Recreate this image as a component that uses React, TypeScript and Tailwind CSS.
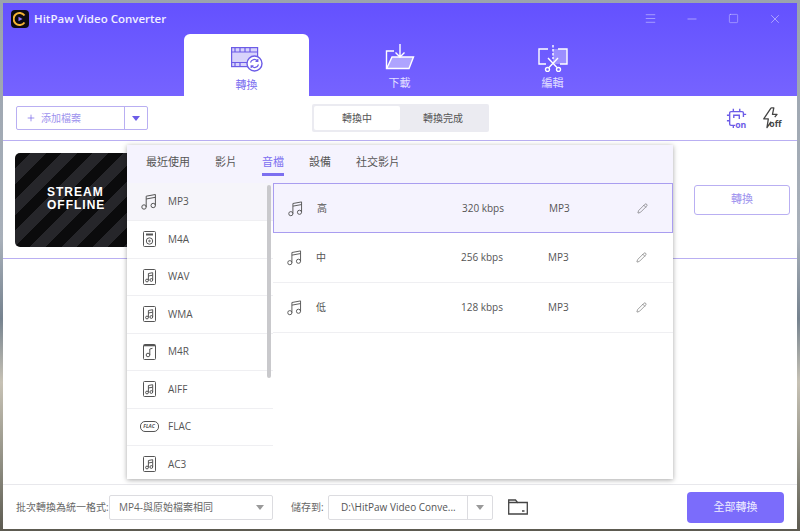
import { Menu, Minus, Square, X, Plus, Pencil } from 'lucide-react'

const font = { fontFamily: '"Open Sans", "Noto Sans CJK TC", sans-serif' }

const formats = [
  { name: 'MP3', icon: 'note' },
  { name: 'M4A', icon: 'player' },
  { name: 'WAV', icon: 'file' },
  { name: 'WMA', icon: 'file' },
  { name: 'M4R', icon: 'ring' },
  { name: 'AIFF', icon: 'file' },
  { name: 'FLAC', icon: 'flac' },
  { name: 'AC3', icon: 'file' }
]

const qualities = [
  { label: '高', rate: '320 kbps' },
  { label: '中', rate: '256 kbps' },
  { label: '低', rate: '128 kbps' }
]

function NoteIcon({ className = 'w-[17px] h-[17px]' }: { className?: string }) {
  return (
    <svg viewBox="0 0 17 17" className={className} fill="none" stroke="#555" strokeWidth="1">
      <circle cx="3" cy="14" r="2.2" />
      <circle cx="12.2" cy="12.5" r="2.2" />
      <path d="M5.2 14V3.2L14.4 1.5V12.5M5.2 6L14.4 4.3" />
    </svg>
  )
}

function FormatIcon({ type }: { type: string }) {
  if (type === 'note') return <NoteIcon />
  if (type === 'flac') {
    return (
      <div className="w-[19px] h-[11px] rounded-[5px] border border-[#555] flex items-center justify-center text-[5px] font-bold italic text-[#555] leading-none">
        FLAC
      </div>
    )
  }
  if (type === 'player') {
    return (
      <svg viewBox="0 0 13 16" className="w-[13px] h-[16px]" fill="none" stroke="#555" strokeWidth="1">
        <rect x="0.5" y="0.5" width="12" height="15" rx="1" />
        <path d="M3 3.5H10" strokeWidth="2" />
        <circle cx="6.5" cy="10" r="3.2" />
        <circle cx="6.5" cy="10" r="0.8" />
      </svg>
    )
  }
  if (type === 'ring') {
    return (
      <svg viewBox="0 0 13 16" className="w-[13px] h-[16px]" fill="none" stroke="#555" strokeWidth="1">
        <rect x="0.5" y="0.5" width="12" height="15" rx="1" />
        <path d="M1 1.5H12" strokeWidth="1.6" />
        <circle cx="5" cy="11" r="1.8" />
        <path d="M6.8 11V5L9.5 4.3" />
      </svg>
    )
  }
  return (
    <svg viewBox="0 0 13 16" className="w-[13px] h-[16px]" fill="none" stroke="#555" strokeWidth="1">
      <rect x="0.5" y="0.5" width="12" height="15" rx="1" />
      <circle cx="4" cy="11.5" r="1.4" />
      <circle cx="8.3" cy="11" r="1.4" />
      <path d="M5.4 11.5V4.5L9.7 3.7V11M5.4 7L9.7 6.2" />
    </svg>
  )
}

function ConvertIcon() {
  return (
    <svg viewBox="0 0 32 27" className="w-[32px] h-[27px]" fill="none" stroke="#6c5ce7" strokeWidth="1.2">
      <rect x="0.6" y="0.6" width="26" height="19" fill="#d8d3fb" />
      <path d="M0.6 5H26.6M0.6 15.5H17M4 0.6V5M9 0.6V5M14 0.6V5M19 0.6V5M4 15.5V19.6M9 15.5V19.6" />
      <circle cx="23.5" cy="16.5" r="7.5" fill="#fff" strokeWidth="1.4" />
      <path d="M19.5 15.5a4 4 0 0 1 7-1.5M27.5 17.5a4 4 0 0 1-7 1.5M26.8 12V14.3H24.5M20.2 21V18.8H22.5" />
    </svg>
  )
}

function DownloadIcon() {
  return (
    <svg viewBox="0 0 30 30" className="w-[30px] h-[30px]" fill="none" stroke="#fff" strokeWidth="1.4">
      <path d="M15 1V14M10.5 9.5L15 14L19.5 9.5" />
      <path d="M9 8H1.5V25.5H24L28.5 14H7L2 25" />
      <path d="M7 14H28.5L24 25.5H2.5Z" fill="#ffffff70" stroke="none" />
    </svg>
  )
}

function EditIcon() {
  return (
    <svg viewBox="0 0 30 27" className="w-[30px] h-[27px]" fill="none" stroke="#fff" strokeWidth="1.4">
      <path d="M10 4H1V19H8M20 4H29V19H22" />
      <rect x="15" y="4" width="14" height="15" fill="#ffffff50" stroke="none" />
      <path d="M15 0V14" strokeDasharray="2.5 1.5" />
      <path d="M10 13L19 22.5M20 13L11 22.5" />
      <circle cx="9.5" cy="24.5" r="2" />
      <circle cx="20.5" cy="24.5" r="2" />
    </svg>
  )
}

function ChipOnIcon() {
  return (
    <svg viewBox="0 0 24 24" className="w-[22px] h-[22px]" fill="none" stroke="#6c5ce7" strokeWidth="1.5">
      <path d="M10 20H5.5A1.5 1.5 0 0 1 4 18.5V6.5A1.5 1.5 0 0 1 5.5 5H17.5A1.5 1.5 0 0 1 19 6.5V11" />
      <path d="M8.5 12V9H14.5V13M8 2V5M15 2V5M1 9H4M1 15H4M19 8H22M8 20V23" />
      <text x="10" y="22.5" fontSize="9.5" fontWeight="700" fill="#6c5ce7" stroke="none" fontFamily="Open Sans">on</text>
    </svg>
  )
}

function FlashOffIcon() {
  return (
    <svg viewBox="0 0 24 24" className="w-[22px] h-[22px]" fill="none" stroke="#444" strokeWidth="1.4">
      <path d="M11 1L3 13H8L6.5 22.5L11 16M11 1H14L12.5 8H17.5L15 11" strokeLinejoin="round" />
      <text x="9" y="22" fontSize="9.5" fontWeight="700" fill="#444" stroke="none" fontFamily="Open Sans">off</text>
    </svg>
  )
}

function FolderIcon() {
  return (
    <svg viewBox="0 0 20 16" className="w-[20px] h-[16px]" fill="none" stroke="#444" strokeWidth="1.3">
      <path d="M0.7 15V1H7.5L9.5 3.5H19.3V15H0.7Z" />
      <path d="M0.7 3.5H9.5M14 12H16.5" />
    </svg>
  )
}

function Caret({ color = '#9a9a9a' }: { color?: string }) {
  return (
    <svg viewBox="0 0 8 5" className="w-[8px] h-[5px]">
      <path d="M0 0H8L4 5Z" fill={color} />
    </svg>
  )
}

function NavTab({ active, label, children }: { active?: boolean; label: string; children: React.ReactNode }) {
  return (
    <div
      className={
        active
          ? 'w-[125px] h-[62px] bg-white rounded-t-[6px] flex flex-col items-center pt-[11px] text-[#7c6ff0]'
          : 'w-[125px] h-[62px] flex flex-col items-center pt-[9px] text-[#e4e0ff]'
      }
    >
      <div className="h-[30px] flex items-center">{children}</div>
      <span className="text-[11px] leading-[14px] mt-[3px]">{label}</span>
    </div>
  )
}

function FormatPopup() {
  return (
    <div className="absolute left-[124px] top-[142px] w-[546px] h-[334px] bg-white shadow-[0_1px_5px_rgba(0,0,0,0.35)] flex flex-col z-10">
      <div className="h-[38px] shrink-0 bg-[#f5f3fe] flex items-start pl-[19px] gap-[25px] text-[11px] text-[#555] leading-[14px] pt-[10px]">
        <span>最近使用</span>
        <span>影片</span>
        <div className="flex flex-col items-center text-[#7c6ff0]">
          <span>音檔</span>
          <div className="w-[22px] h-[3px] bg-[#7c6ff0] mt-[4px]" />
        </div>
        <span>設備</span>
        <span>社交影片</span>
      </div>
      <div className="flex-1 flex min-h-0">
        <div className="w-[146px] shrink-0 relative overflow-hidden">
          {formats.map((f, i) => (
            <div
              key={f.name}
              className={
                i === 0
                  ? 'h-[38px] flex items-center bg-[#f6f5fa] border-b border-[#efeff2]'
                  : 'h-[37.5px] flex items-center border-b border-[#efeff2]'
              }
            >
              <div className="w-[41px] flex justify-center pl-[3px]">
                <FormatIcon type={f.icon} />
              </div>
              <span className="text-[10px] text-[#555]">{f.name}</span>
            </div>
          ))}
          <div className="absolute left-[140px] top-[2px] w-[4px] h-[193px] rounded-full bg-[#c9c9cc]" />
        </div>
        <div className="flex-1 flex flex-col">
          {qualities.map((q, i) => (
            <div
              key={q.label}
              className={
                i === 0
                  ? 'h-[50px] flex items-center pl-[14px] bg-[#f5f3fe] border border-[#a99df0] text-[10px] text-[#555]'
                  : 'h-[50px] flex items-center pl-[14px] border-b border-[#efeff2] text-[10px] text-[#555]'
              }
            >
              <NoteIcon className="w-[16px] h-[17px]" />
              <span className="ml-[13px] w-[145px]">{q.label}</span>
              <span className="w-[87px]">{q.rate}</span>
              <span className="w-[88px]">{q.name ?? 'MP3'}</span>
              <Pencil className="w-[11px] h-[11px] text-[#555]" strokeWidth={1.2} />
            </div>
          ))}
        </div>
      </div>
    </div>
  )
}

export default function App() {
  return (
    <div
      className="w-[800px] h-[531px] overflow-hidden pt-[3px] pl-[3px] bg-[linear-gradient(180deg,#9aa3ad_0%,#a8b0ba_45%,#76838f_60%,#c7c2b5_72%,#8d8c80_88%,#5c5a50_100%)]"
      style={font}
    >
      <div className="w-[794px] h-[526px] bg-white flex flex-col relative">
        {/* Title bar and tabs */}
        <div className="h-[93px] shrink-0 bg-gradient-to-b from-[#6451ff] to-[#7663ff] flex flex-col">
          <div className="h-[31px] flex items-center pl-[8px] pr-[15px]">
            <div className="w-[18px] h-[18px] rounded-[4px] bg-[#0d0b12] flex items-center justify-center">
              <svg viewBox="0 0 14 14" className="w-[14px] h-[14px]" fill="none">
                <path d="M11.5 3.5A6 6 0 1 0 11.5 10.5" stroke="#f5b335" strokeWidth="2" />
                <path d="M5.5 4.7L9.5 7L5.5 9.3Z" fill="#8f73ff" />
              </svg>
            </div>
            <span className="ml-[5px] text-[11.5px] font-semibold text-[#f1efff]">HitPaw Video Converter</span>
            <div className="ml-auto flex items-center gap-[28px] text-[#dcd8ff]">
              <Menu className="w-[13px] h-[13px]" strokeWidth={1} />
              <Minus className="w-[14px] h-[14px]" strokeWidth={1} />
              <Square className="w-[11px] h-[11px] mx-[1px]" strokeWidth={1} />
              <X className="w-[14px] h-[14px]" strokeWidth={1} />
            </div>
          </div>
          <div className="flex gap-[28px] pl-[181px]">
            <NavTab active label="轉換">
              <ConvertIcon />
            </NavTab>
            <NavTab label="下載">
              <DownloadIcon />
            </NavTab>
            <NavTab label="編輯">
              <EditIcon />
            </NavTab>
          </div>
        </div>

        {/* Toolbar */}
        <div className="h-[44px] shrink-0 flex items-center pl-[13px] pr-[14px]">
          <div className="w-[132px] h-[24px] border border-[#b9aff2] rounded-[2px] flex items-center">
            <div className="w-[107px] flex items-center pl-[9px] gap-[5px] text-[10px] text-[#9d92ee]">
              <Plus className="w-[10px] h-[10px] text-[#6c5ce7]" strokeWidth={1.6} />
              添加檔案
            </div>
            <div className="flex-1 h-full border-l border-[#b9aff2] flex items-center justify-center">
              <Caret color="#6c5ce7" />
            </div>
          </div>
          <div className="ml-[164px] w-[177px] h-[28px] bg-[#ebebf1] rounded-[2px] flex items-center pl-[2px] text-[10px] text-[#555]">
            <div className="w-[86px] h-[24px] bg-white rounded-[2px] flex items-center justify-center">轉換中</div>
            <div className="flex-1 text-center pr-[3px]">轉換完成</div>
          </div>
          <div className="ml-auto flex items-center gap-[13px]">
            <ChipOnIcon />
            <FlashOffIcon />
          </div>
        </div>

        {/* File row */}
        <div className="h-[119px] shrink-0 border-y border-[#b9aff2] pl-[12px] pr-[7px] flex items-center">
          <div className="w-[140px] h-[94px] rounded-[5px] bg-[repeating-linear-gradient(135deg,#0b0b0c_0px,#0b0b0c_11px,#26262a_11px,#26262a_22px)] flex flex-col items-start pl-[32px] pt-[33px] text-white font-bold leading-[13px] text-[12px]" style={{ fontFamily: '"Liberation Sans", sans-serif', letterSpacing: '1px' }}>
            <span>STREAM</span>
            <span>OFFLINE</span>
          </div>
          <div className="ml-auto w-[96px] h-[30px] border border-[#b9aff2] rounded-[3px] flex items-center justify-center text-[11px] text-[#9d92ee]">
            轉換
          </div>
        </div>

        <div className="flex-1" />

        {/* Bottom bar */}
        <div className="h-[45px] shrink-0 border-t border-[#e8e8ec] flex items-center pl-[13px] pr-[13px] text-[10px] text-[#666]">
          <span className="w-[93px]">批次轉換為統一格式:</span>
          <div className="w-[164px] h-[25px] border border-[#dcdce0] rounded-[2px] flex items-center justify-between pl-[9px] pr-[8px]">
            <span>MP4-與原始檔案相同</span>
            <Caret />
          </div>
          <span className="ml-[18px] w-[37px]">儲存到:</span>
          <div className="w-[165px] h-[25px] border border-[#dcdce0] rounded-[2px] flex items-center">
            <span className="w-[138px] pl-[12px] text-[#555]">D:\HitPaw Video Conve...</span>
            <div className="flex-1 h-full border-l border-[#dcdce0] flex items-center justify-center">
              <Caret />
            </div>
          </div>
          <div className="ml-[15px]">
            <FolderIcon />
          </div>
          <div className="ml-auto w-[97px] h-[31px] rounded-[4px] bg-[#7b6cfb] flex items-center justify-center text-[11px] text-[#efedff]">
            全部轉換
          </div>
        </div>

        <FormatPopup />
      </div>
    </div>
  )
}
